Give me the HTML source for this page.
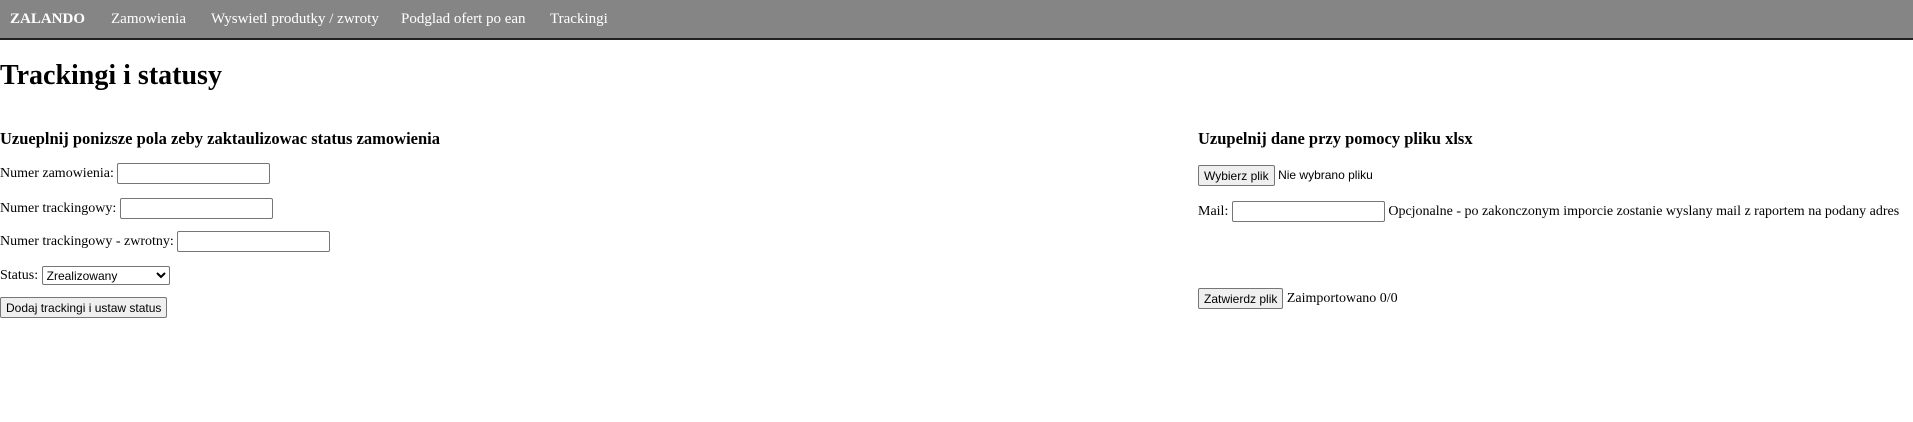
<!DOCTYPE html>
<html><head><meta charset="utf-8"><style>
body{margin:0;width:1913px;height:422px;overflow:hidden;background:#fff;font-family:"Liberation Serif",serif;font-size:14px;color:#000;position:relative}
.nav{position:absolute;left:0;top:0;width:1913px;height:38px;background:#858585;border-bottom:2px solid #222}
.nav span{position:absolute;top:0;line-height:38px;color:#fff;font-size:15px}
.a{position:absolute;white-space:nowrap;line-height:22px}
input[type=text]{width:147px;height:17px;border:1px solid #767676;border-radius:2px;padding:1px 2px;margin:0;vertical-align:middle;font-size:13px}
button{font-family:"Liberation Sans",sans-serif;font-size:12px;background:#efefef;border:1px solid #767676;border-radius:2px;padding:1px 5px;height:21px;margin:0;vertical-align:middle}
select{font-family:"Liberation Sans",sans-serif;font-size:12px;width:128px;height:19px;border:1px solid #767676;border-radius:2px;margin:0;vertical-align:middle;background:#fff}
.s{font-family:"Liberation Sans",sans-serif;font-size:12px}
</style></head><body>
<div class="nav">
<span style="left:10px;font-weight:bold">ZALANDO</span>
<span style="left:111px">Zamowienia</span>
<span style="left:211px">Wyswietl produtky / zwroty</span>
<span style="left:401px">Podglad ofert po ean</span>
<span style="left:550px">Trackingi</span>
</div>
<div class="a" style="left:0;top:59px;font-size:28px;font-weight:bold;line-height:34px">Trackingi i statusy</div>
<div class="a" style="left:0;top:128px;font-size:16.5px;font-weight:bold">Uzueplnij ponizsze pola zeby zaktaulizowac status zamowienia</div>
<div class="a" style="left:0;top:163px">Numer zamowienia: <input type="text"></div>
<div class="a" style="left:0;top:198px">Numer trackingowy: <input type="text"></div>
<div class="a" style="left:0;top:231px">Numer trackingowy - zwrotny: <input type="text"></div>
<div class="a" style="left:0;top:265px">Status: <select><option>Zrealizowany</option></select></div>
<div class="a" style="left:0;top:297px"><button>Dodaj trackingi i ustaw status</button></div>
<div class="a" style="left:1198px;top:128px;font-size:16.5px;font-weight:bold">Uzupelnij dane przy pomocy pliku xlsx</div>
<div class="a" style="left:1198px;top:164px"><button>Wybierz plik</button> <span class="s">Nie wybrano pliku</span></div>
<div class="a" style="left:1198px;top:201px">Mail: <input type="text"> Opcjonalne - po zakonczonym imporcie zostanie wyslany mail z raportem na podany adres</div>
<div class="a" style="left:1198px;top:288px"><button>Zatwierdz plik</button> Zaimportowano 0/0</div>
</body></html>
